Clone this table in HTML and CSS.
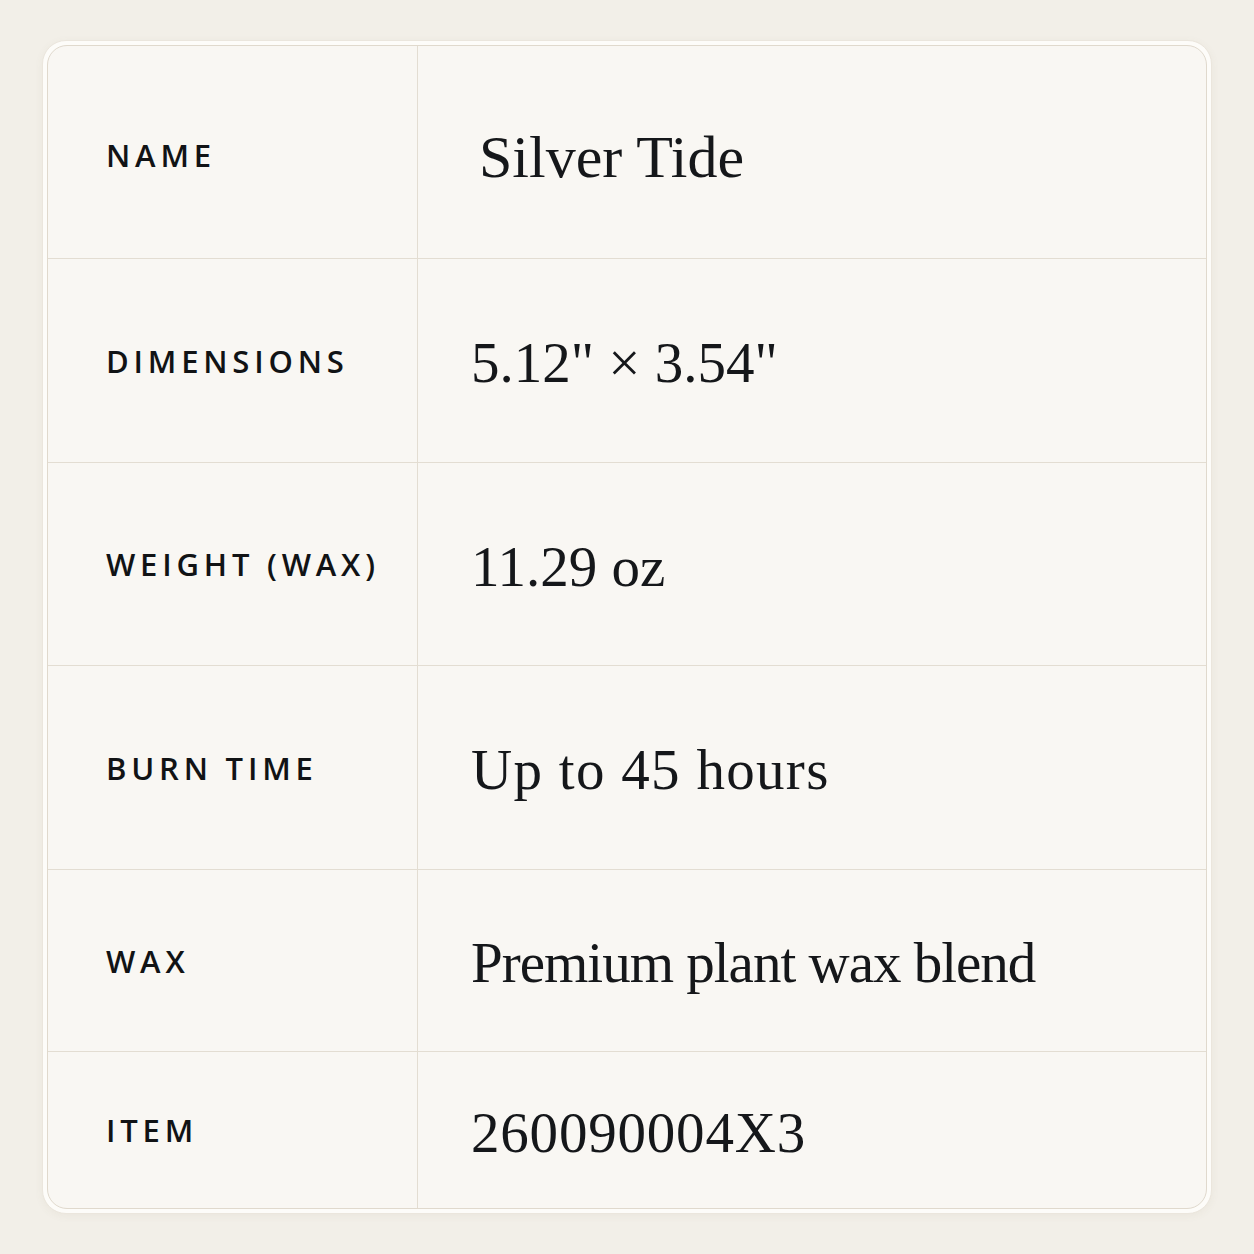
FILE: index.html
```html
<!DOCTYPE html>
<html lang="en">
<head>
<meta charset="utf-8">
<title>Silver Tide — Specifications</title>
<link rel="stylesheet" href="styles.css">
</head>
<body>
<div class="card">
  <div class="table">
    <div class="row r1">
      <div class="label">NAME</div>
      <div class="value name">Silver Tide</div>
    </div>
    <div class="row r2">
      <div class="label">DIMENSIONS</div>
      <div class="value">5.12" × 3.54"</div>
    </div>
    <div class="row r3">
      <div class="label">WEIGHT (WAX)</div>
      <div class="value">11.29 oz</div>
    </div>
    <div class="row r4">
      <div class="label">BURN TIME</div>
      <div class="value">Up to 45 hours</div>
    </div>
    <div class="row r5">
      <div class="label">WAX</div>
      <div class="value">Premium plant wax blend</div>
    </div>
    <div class="row r6">
      <div class="label">ITEM</div>
      <div class="value">260090004X3</div>
    </div>
  </div>
</div>
</body>
</html>
```

FILE: styles.css
```css
html, body {
  margin: 0;
  padding: 0;
}
body {
  background: #f2efe8;
  width: 1254px;
  height: 1254px;
  padding: 40px 0 0 42px;
  box-sizing: border-box;
}
.card {
  width: 1170px;
  height: 1174px;
  box-sizing: border-box;
  padding: 4px;
  background: #fdfcf9;
  border: 1px solid #ebe6dd;
  border-radius: 24px;
  box-shadow: 0 2px 8px rgba(120, 100, 70, 0.06);
}
.table {
  height: 100%;
  box-sizing: border-box;
  border: 1px solid #e0d9cd;
  border-radius: 20px;
  background: #f9f7f3;
  overflow: hidden;
  display: grid;
  grid-template-rows: 213px 204px 203px 204px 182px 1fr;
}
.row {
  display: grid;
  grid-template-columns: 370px 1fr;
  border-bottom: 1px solid #e3ddd2;
}
.row.r1 {
  padding-top: 6px;
}
.row.r6 {
  border-bottom: none;
}
.label {
  border-right: 1px solid #e3ddd2;
  display: flex;
  align-items: center;
  padding-left: 58px;
  font-family: "Open Sans", "Liberation Sans", sans-serif;
  font-weight: 600;
  font-size: 31px;
  letter-spacing: 0.155em;
  color: #111315;
}
.row.r1 .label {
  margin-top: -6px;
  padding-top: 6px;
}
.value {
  display: flex;
  align-items: center;
  padding-left: 53px;
  font-family: "Liberation Serif", "Times New Roman", serif;
  font-size: 57px;
  color: #15171a;
  padding-top: 4px;
}
.value.name {
  padding-left: 61px;
  font-size: 60px;
}
.row.r4 .value {
  letter-spacing: 1.3px;
}
.row.r5 .value {
  letter-spacing: -1px;
}
.row.r6 .value {
  letter-spacing: 0.8px;
}
```
